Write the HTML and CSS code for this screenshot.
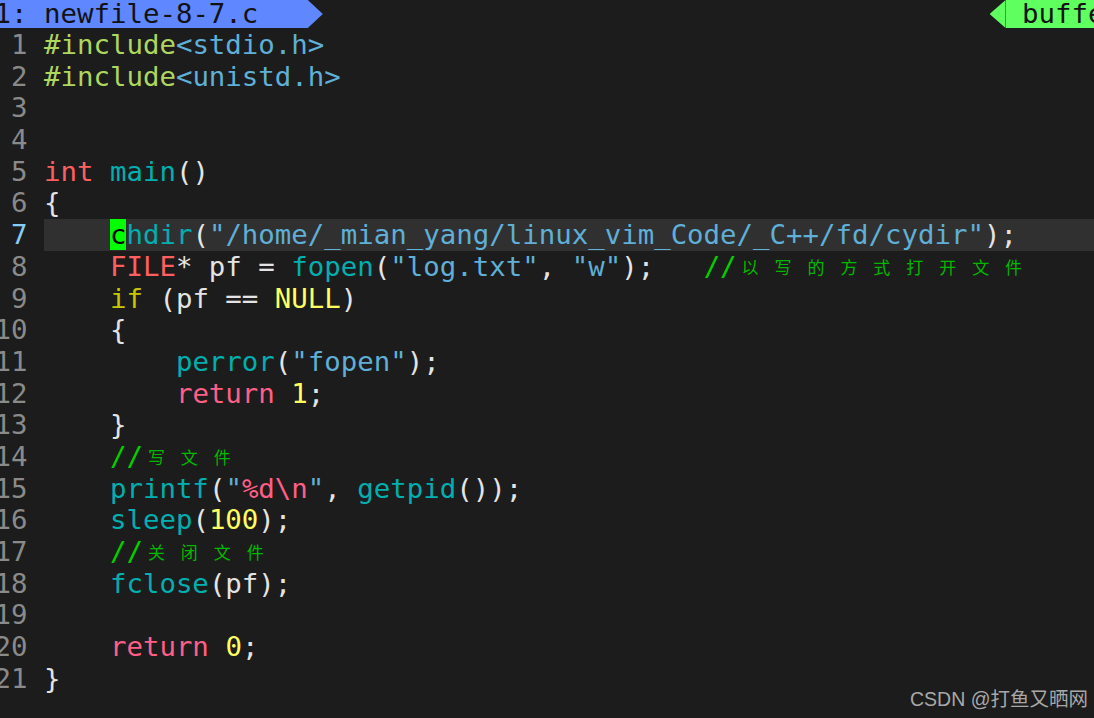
FILE: index.html
```html
<!DOCTYPE html>
<html lang="zh-CN">
<head>
  <meta charset="UTF-8">
  <meta name="viewport" content="width=device-width, initial-scale=1.0">
  <title>newfile-8-7.c - vim</title>
  <link rel="stylesheet" href="styles.css">
</head>
<body>

  <!-- Tab line -->
  <div class="tabline">
    <div class="tab-left"><span class="tab-text"> 1: newfile-8-7.c   </span><span class="arrow-right"></span></div>
    <div class="tab-right"><span class="arrow-left"></span><span class="tab-text"> buffers </span></div>
  </div>

  <!-- Editor -->
  <div class="editor">
    <div class="line"><span class="nr">1</span><span class="code"><span class="pp">#include</span><span class="inc">&lt;stdio.h&gt;</span></span></div>
    <div class="line"><span class="nr">2</span><span class="code"><span class="pp">#include</span><span class="inc">&lt;unistd.h&gt;</span></span></div>
    <div class="line"><span class="nr">3</span><span class="code"></span></div>
    <div class="line"><span class="nr">4</span><span class="code"></span></div>
    <div class="line"><span class="nr">5</span><span class="code"><span class="type">int</span> <span class="fn">main</span>()</span></div>
    <div class="line"><span class="nr">6</span><span class="code">{</span></div>
    <div class="line current"><span class="nr">7</span><span class="code">    <span class="cursor">c</span><span class="fn">hdir</span>(<span class="str">"/home/_mian_yang/linux_vim_Code/_C++/fd/cydir"</span>);</span></div>
    <div class="line"><span class="nr">8</span><span class="code">    <span class="type">FILE</span>* pf = <span class="fn">fopen</span>(<span class="str">"log.txt"</span>, <span class="str">"w"</span>);   <span class="cmt">//<span class="cjk">以</span><span class="cjk">写</span><span class="cjk">的</span><span class="cjk">方</span><span class="cjk">式</span><span class="cjk">打</span><span class="cjk">开</span><span class="cjk">文</span><span class="cjk">件</span></span></span></div>
    <div class="line"><span class="nr">9</span><span class="code">    <span class="kw">if</span> (pf == <span class="const">NULL</span>)</span></div>
    <div class="line"><span class="nr">10</span><span class="code">    {</span></div>
    <div class="line"><span class="nr">11</span><span class="code">        <span class="fn">perror</span>(<span class="str">"fopen"</span>);</span></div>
    <div class="line"><span class="nr">12</span><span class="code">        <span class="ret">return</span> <span class="num">1</span>;</span></div>
    <div class="line"><span class="nr">13</span><span class="code">    }</span></div>
    <div class="line"><span class="nr">14</span><span class="code">    <span class="cmt">//<span class="cjk">写</span><span class="cjk">文</span><span class="cjk">件</span></span></span></div>
    <div class="line"><span class="nr">15</span><span class="code">    <span class="fn">printf</span>(<span class="str">"<span class="spec">%d\n</span>"</span>, <span class="fn">getpid</span>());</span></div>
    <div class="line"><span class="nr">16</span><span class="code">    <span class="fn">sleep</span>(<span class="num">100</span>);</span></div>
    <div class="line"><span class="nr">17</span><span class="code">    <span class="cmt">//<span class="cjk">关</span><span class="cjk">闭</span><span class="cjk">文</span><span class="cjk">件</span></span></span></div>
    <div class="line"><span class="nr">18</span><span class="code">    <span class="fn">fclose</span>(pf);</span></div>
    <div class="line"><span class="nr">19</span><span class="code"></span></div>
    <div class="line"><span class="nr">20</span><span class="code">    <span class="ret">return</span> <span class="num">0</span>;</span></div>
    <div class="line"><span class="nr">21</span><span class="code">}</span></div>
  </div>

  <!-- Watermark -->
  <div class="watermark">CSDN @打鱼又晒网</div>

</body>
</html>
```

FILE: styles.css
```css
/* Basic Styles */
body {
  margin: 0;
  padding: 0;
  width: 1094px;
  height: 718px;
  overflow: hidden;
  position: relative;
  background-color: #1c1c1c;
  color: #e4e4e4;
  font-family: "DejaVu Sans Mono", monospace;
  font-size: 27.4px;
}

/* Tab line (wider than the window, the right tab runs off the edge) */
.tabline {
  display: flex;
  justify-content: space-between;
  width: 1176px;
  height: 29px;
  margin-left: -22px;
  white-space: pre;
}

.tab-left,
.tab-right {
  display: flex;
  height: 28px;
  line-height: 28px;
  color: #121212;
}

.tab-left .tab-text {
  background-color: #5f87ff;
}

.tab-right .tab-text {
  background-color: #5fff5f;
}

.arrow-right {
  width: 15px;
  height: 28px;
  background-color: #5f87ff;
  clip-path: polygon(0 0, 100% 50%, 0 100%);
}

.arrow-left {
  width: 16px;
  height: 28px;
  background-color: #5fff5f;
  clip-path: polygon(100% 0, 0 50%, 100% 100%);
}

/* Editor */
.editor {
  margin-left: -22px;
}

.line {
  display: flex;
  height: 31.7px;
  line-height: 31.7px;
  white-space: pre;
}

.nr {
  width: 3ch;
  padding-right: 1ch;
  text-align: right;
  color: #8a8a8a;
  flex-shrink: 0;
}

.code {
  flex: 1;
}

.current .code {
  background-color: #303030;
}

.current .nr {
  color: #87cdf5;
}

.cursor {
  background-color: #00ff00;
  color: #000;
}

/* Syntax colours */
.pp { color: #afd75f; }
.inc { color: #5fafd7; }
.type { color: #ff5f5f; }
.fn { color: #00afaf; }
.str { color: #5fafd7; }
.kw { color: #c8c800; }
.const { color: #ffff5f; }
.ret { color: #ff5f87; }
.num { color: #ffff5f; }
.spec { color: #ff5f87; }
.cmt { color: #00d000; }

/* wide chars take two cells */
.cjk {
  display: inline-block;
  width: 32.94px;
  padding-left: 5px;
  box-sizing: border-box;
  font-family: "Noto Sans CJK SC", sans-serif;
  font-size: 17px;
  color: #00b800;
  vertical-align: top;
}

/* Watermark */
.watermark {
  position: absolute;
  right: 6px;
  bottom: 6px;
  font-family: "Liberation Sans", "Noto Sans CJK SC", sans-serif;
  font-size: 19.5px;
  color: #a8a8a8;
}
```
